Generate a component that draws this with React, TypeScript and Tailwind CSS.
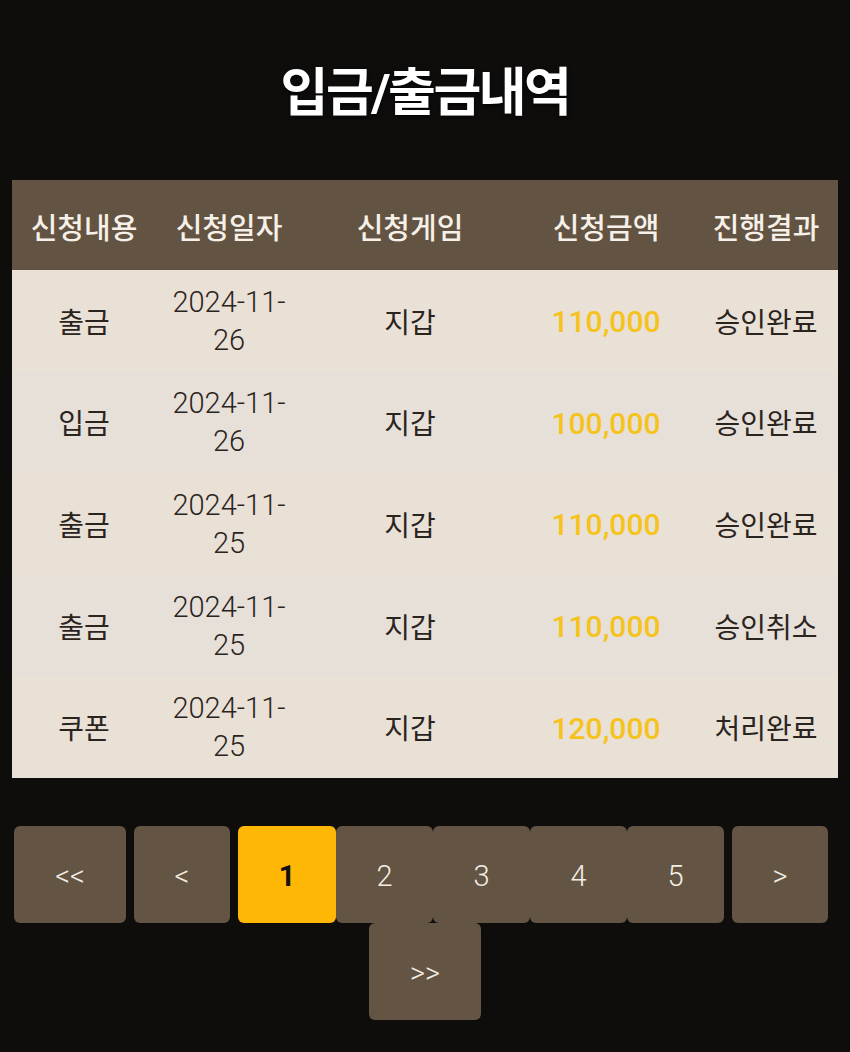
import React from "react";

const rows = [
  { type: "출금", date: "26", amount: "110,000", result: "승인완료" },
  { type: "입금", date: "26", amount: "100,000", result: "승인완료" },
  { type: "출금", date: "25", amount: "110,000", result: "승인완료" },
  { type: "출금", date: "25", amount: "110,000", result: "승인취소" },
  { type: "쿠폰", date: "25", amount: "120,000", result: "처리완료" },
];

const KR = { fontFamily: "Roboto, 'Noto Sans CJK KR', sans-serif" };

export default function App() {
  return (
    <div className="min-h-[1052px] w-[850px] bg-[#0f0d0c]" style={KR}>
      <div className="h-[180px] flex items-center justify-center pt-[8px]">
        <h1 className="text-white text-[52px] font-bold tracking-[-2.5px] [text-shadow:0_2px_4px_rgba(0,0,0,0.8)]">
          입금/출금내역
        </h1>
      </div>
      <div className="mx-[12px] w-[826px]">
        <div className="grid grid-cols-[144px_146px_216px_176px_144px] h-[90px] pt-[10px] bg-[#625342] text-[#f6f0e8] text-[29px] font-medium items-center text-center">
          <div>신청내용</div>
          <div>신청일자</div>
          <div>신청게임</div>
          <div>신청금액</div>
          <div>진행결과</div>
        </div>
        {rows.map((r, i) => (
          <div
            key={i}
            className={`grid grid-cols-[144px_146px_216px_176px_144px] h-[101.6px] items-center text-center text-[#2b241e] ${
              i % 2 === 0 ? "bg-[#e9e0d6]" : "bg-[#e6e0d9]"
            }`}
          >
            <div className="text-[28px] pt-[6px]">{r.type}</div>
            <div className="text-[29px] leading-[38px] font-light">
              2024-11-
              <br />
              {r.date}
            </div>
            <div className="text-[28px] pt-[6px]">지갑</div>
            <div className="text-[30px] font-medium text-[#f5c31c] pt-[2px]">{r.amount}</div>
            <div className="text-[28px] pt-[6px]">{r.result}</div>
          </div>
        ))}
      </div>
      <div className="mt-[48px] flex flex-wrap justify-center text-[#f3ede5] text-[29px] font-light">
        <button className="w-[112px] h-[97px] mr-2 pt-[4px] rounded-[6px] bg-[#635443] flex items-center justify-center">
          &lt;&lt;
        </button>
        <button className="w-[96px] h-[97px] mr-2 pt-[4px] rounded-[6px] bg-[#635443] flex items-center justify-center">
          &lt;
        </button>
        <button className="w-[98px] h-[97px] pt-[4px] rounded-[6px] bg-[#ffb705] text-[#111] font-bold flex items-center justify-center">
          1
        </button>
        {["2", "3", "4", "5"].map((n) => (
          <button
            key={n}
            className="w-[97px] h-[97px] pt-[4px] rounded-[6px] bg-[#635443] flex items-center justify-center"
          >
            {n}
          </button>
        ))}
        <button className="w-[96px] h-[97px] ml-2 mr-2 pt-[4px] rounded-[6px] bg-[#635443] flex items-center justify-center">
          &gt;
        </button>
        <button className="w-[112px] h-[97px] pt-[4px] rounded-[6px] bg-[#635443] flex items-center justify-center">
          &gt;&gt;
        </button>
      </div>
    </div>
  );
}
